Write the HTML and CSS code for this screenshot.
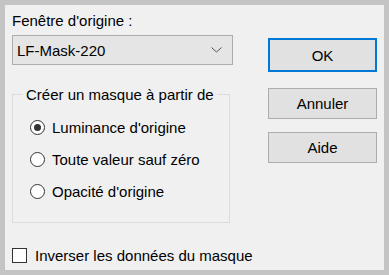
FILE: index.html
```html
<!DOCTYPE html>
<html lang="fr">
<head>
    <meta charset="UTF-8">
    <title>Nouveau masque</title>
    <link rel="stylesheet" href="styles.css">
</head>
<body>
    <div class="dialog">
        <div class="main">
            <div class="left">
                <div class="field-label">Fenêtre d'origine :</div>
                <div class="combo">
                    <span>LF-Mask-220</span>
                    <svg class="chevron" width="11" height="6" viewBox="0 0 11 6">
                        <polyline points="0.5,0.5 5.5,5 10.5,0.5" fill="none" stroke="#555" stroke-width="1"/>
                    </svg>
                </div>
                <fieldset class="group">
                    <legend>Créer un masque à partir de</legend>
                    <label class="radio"><span class="dot checked"></span>Luminance d'origine</label>
                    <label class="radio"><span class="dot"></span>Toute valeur sauf zéro</label>
                    <label class="radio"><span class="dot"></span>Opacité d'origine</label>
                </fieldset>
            </div>
            <div class="buttons">
                <button class="btn default">OK</button>
                <button class="btn">Annuler</button>
                <button class="btn">Aide</button>
            </div>
        </div>
        <label class="check"><span class="box"></span>Inverser les données du masque</label>
    </div>
</body>
</html>
```

FILE: styles.css
```css
* {
    margin: 0;
    padding: 0;
    box-sizing: border-box;
}
body {
    background-color: #c4c4c4;
    font-family: "Liberation Sans", Arial, sans-serif;
    font-size: 15px;
    color: #000;
    padding: 5px;
}
.dialog {
    width: 379px;
    height: 265px;
    background-color: #f0f0f0;
    padding: 7px 7px 0 7px;
}
.main {
    display: flex;
    justify-content: space-between;
}
.left {
    width: 221px;
}
.field-label {
    height: 23px;
    line-height: 17px;
}
.combo {
    height: 30px;
    border: 1px solid #adadad;
    background-color: #e5e5e5;
    display: flex;
    align-items: center;
    justify-content: space-between;
    padding: 0 10px 0 4px;
}
.group {
    margin-top: 21px;
    width: 218px;
    height: 137px;
    border: 1px solid #dcdcdc;
    padding: 8px 0 0 17px;
}
.group legend {
    margin-left: -7px;
    padding: 0 3px;
    line-height: 17px;
    white-space: nowrap;
}
.radio {
    display: flex;
    align-items: center;
    height: 32px;
}
.dot {
    width: 15px;
    height: 15px;
    border: 1px solid #333;
    border-radius: 50%;
    background-color: #fff;
    margin-right: 7px;
    display: flex;
    align-items: center;
    justify-content: center;
}
.dot.checked::after {
    content: "";
    width: 7px;
    height: 7px;
    border-radius: 50%;
    background-color: #333;
}
.buttons {
    width: 109px;
    display: flex;
    flex-direction: column;
    padding-top: 26px;
}
.btn {
    font-family: inherit;
    font-size: 15px;
    color: #000;
    background-color: #e1e1e1;
    border: 1px solid #adadad;
    height: 31px;
    margin-bottom: 13px;
}
.btn.default {
    border: 2px solid #0078d7;
    height: 34px;
    margin-bottom: 16px;
}
.check {
    display: flex;
    align-items: center;
    margin-top: 24px;
}
.box {
    width: 15px;
    height: 15px;
    border: 1px solid #333;
    background-color: #fff;
    margin-right: 8px;
}
```
